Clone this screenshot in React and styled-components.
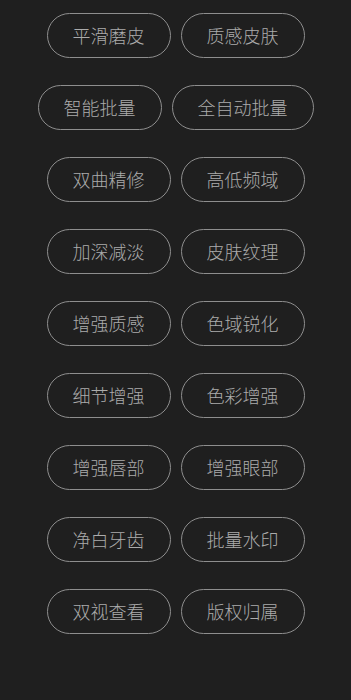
import React from "react";
import styled, { createGlobalStyle } from "styled-components";

const GlobalStyle = createGlobalStyle`
  html, body {
    margin: 0;
    padding: 0;
    background-color: #1f1f1f;
  }
`;

const Page = styled.div`
  width: 351px;
  min-height: 700px;
  background-color: #1f1f1f;
  box-sizing: border-box;
  padding-top: 13px;
`;

const TagList = styled.div`
  display: flex;
  flex-wrap: wrap;
  justify-content: center;
  column-gap: 10px;
  row-gap: 27px;
`;

const Tag = styled.button`
  box-sizing: border-box;
  height: 45px;
  padding: 0 25px;
  border: 1px solid #8e8e8e;
  border-radius: 23px;
  background: transparent;
  color: #ababab;
  font-family: "Noto Sans CJK SC", "Noto Sans", sans-serif;
  font-size: 18px;
  font-weight: 300;
  line-height: 43px;
  white-space: nowrap;
  cursor: pointer;
`;

const tags = [
  "平滑磨皮",
  "质感皮肤",
  "智能批量",
  "全自动批量",
  "双曲精修",
  "高低频域",
  "加深减淡",
  "皮肤纹理",
  "增强质感",
  "色域锐化",
  "细节增强",
  "色彩增强",
  "增强唇部",
  "增强眼部",
  "净白牙齿",
  "批量水印",
  "双视查看",
  "版权归属",
];

function App() {
  return (
    <Page>
      <GlobalStyle />
      <TagList>
        {tags.map((t) => (
          <Tag key={t}>{t}</Tag>
        ))}
      </TagList>
    </Page>
  );
}

export default App;
